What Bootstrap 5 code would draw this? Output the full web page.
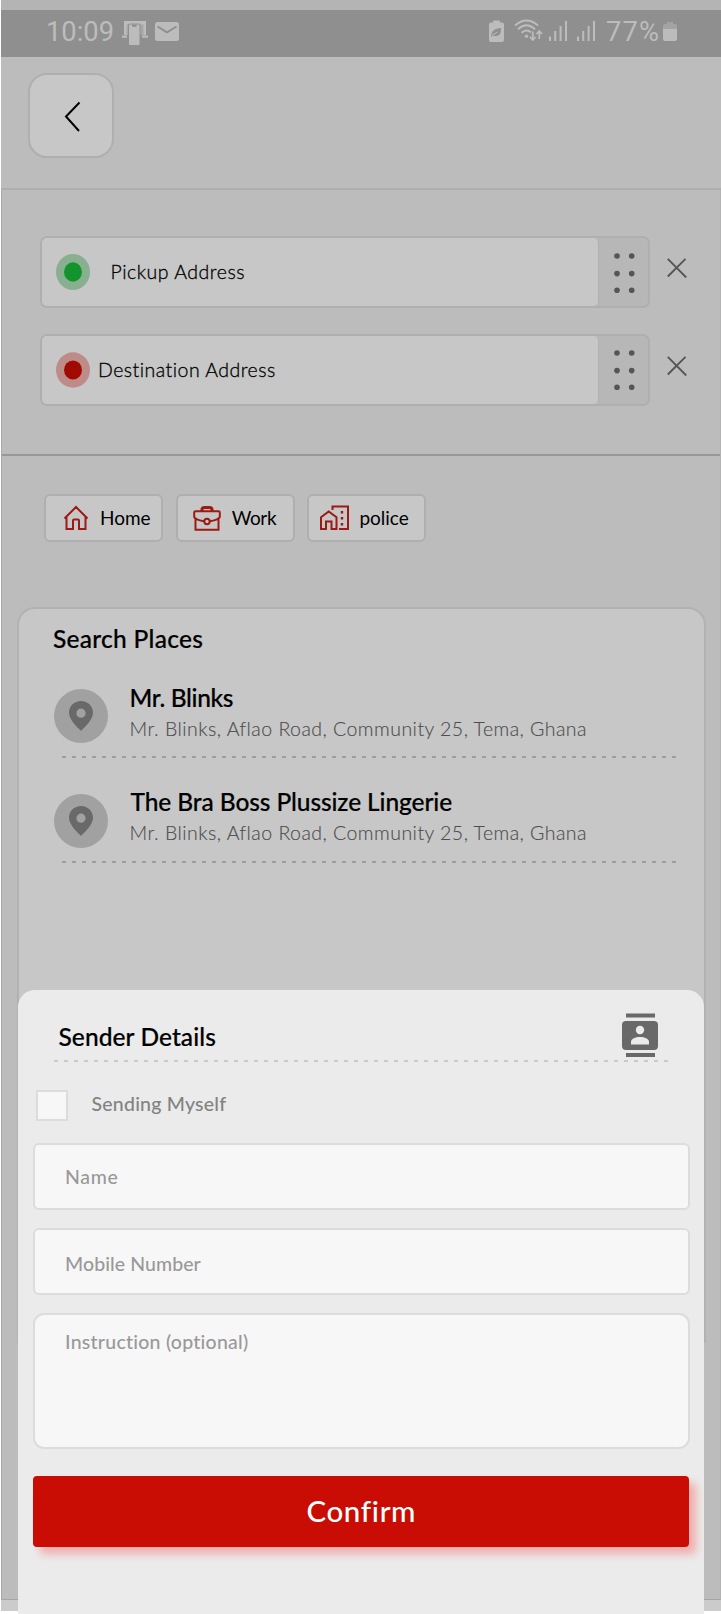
<!DOCTYPE html>
<html lang="en">
<head>
<meta charset="utf-8">
<meta name="viewport" content="width=device-width, initial-scale=1">
<title>Sender Details</title>
<link href="https://cdn.jsdelivr.net/npm/bootstrap@5.3.0/dist/css/bootstrap.min.css" rel="stylesheet">
<script src="https://cdn.jsdelivr.net/npm/bootstrap@5.3.0/dist/js/bootstrap.bundle.min.js" defer></script>
<style>
body{background:#fff;font-family:Lato,"Liberation Sans",sans-serif;color:#000;width:721px;overflow:hidden}
svg{display:block;flex:none}
.phone{width:721px;height:1614px;overflow:hidden}
.screen{height:1611px;margin-left:1px;background:#cbcbcb}
.strip{height:10px;background:#b4b4b4}
.status{height:47px;background:#8f8f8f;color:#bcbcbc;font-family:Roboto,sans-serif;font-size:27.3px;line-height:45px;padding:0 44px 0 45px}
.s-phone{margin:10px 0 0 7px}
.s-mail{margin:12px 0 0 6px}
.s-eco{margin:10px 0 0 auto}
.s-wifi{margin:9px 0 0 10px}
.s-sig{margin:11px 0 0 6px}
.s-sig + .s-sig{margin-left:9px}
.s-pct{margin-left:10px;letter-spacing:1.1px}
.s-bat{margin:12px 0 0 3px}
.topbar{height:133px;background:#bcbcbc;border-bottom:2px solid #aeaeae;padding:16px 0 0 27px}
.back{width:86px;height:85px;border:2px solid #afafaf;border-radius:19px;background:#c7c7c7;padding:26px 0 0 34px}
.lower{height:1410px;background:#bcbcbc;border-left:1px solid #a9a9a9;border-right:1px solid #b3b3b3;border-bottom:1px solid #a5a5a5}
.stops{height:266px;border-bottom:2px solid #989898;padding:46px 0 0 38px}
.stop + .stop{margin-top:25.5px}
.track{width:610px;height:72px;border:2px solid #afafaf;border-radius:7px;background:#b7b7b7}
.field{width:557px;border-right:1px solid #b1b1b1;border-radius:5px;background:#c7c7c7;padding-left:14px;font-size:19.5px;font-weight:300;letter-spacing:.52px;-webkit-text-stroke:.3px #000}
.field svg{margin-right:20.5px}
.field.near{letter-spacing:.48px}
.field.near svg{margin-right:8px}
.handle{margin:1px 0 0 15px}
.drop{margin:22px 0 0 17px}
.tags{height:151px;padding:38px 0 0 42px;gap:12.7px}
.chip{width:119px;height:48px;border:2px solid #afafaf;border-radius:6px;background:#c7c7c7;font-size:19px;line-height:44px}
.places{width:689px;height:736px;margin-left:15px;border:2px solid #b2b2b2;border-radius:18px 18px 0 0;background:#c7c7c7;padding:13px 0 0 34px}
.ttl{font-size:24.5px;font-weight:500;line-height:34px;white-space:nowrap;-webkit-text-stroke:.2px #000}
.place{height:104.5px}
.place-text{margin-top:-.5px}
.pin{width:54px;height:54px;margin:8px 22px 0 .5px;background:#a1a1a1}
.addr{font-size:19.5px;font-weight:300;line-height:28px;letter-spacing:.47px;color:#4e4e4e;-webkit-text-stroke:.15px #4e4e4e;white-space:nowrap}
.dash{height:2px;opacity:.9;background:repeating-linear-gradient(90deg,#999 0 4px,transparent 4px 10px)}
.place .dash{width:615px;margin:13px 0 0 9px}
.sheet{left:17.5px;top:990px;width:686.5px;height:624px;border-radius:17px 17px 0 0;background:#ebebeb;padding:0 15px}
.sheet-head{height:70px;padding:23px 31px 0 26px}
.sheet .dash{width:615px;margin:0 0 28px 21px;opacity:1;background:repeating-linear-gradient(90deg,#c9c9c9 0 4px,transparent 4px 10px)}
.box{width:32px;height:31px;border:2px solid #dcdcdc;background:#f7f7f7}
.self{height:53px;padding-left:3px;font-size:19.5px;font-weight:500;color:#828282;letter-spacing:.22px;line-height:28px}
.inp{height:67px;border:2px solid #dcdcdc;border-radius:6px;background:#f7f7f7;padding-left:30.5px;font-size:19.5px;font-weight:500;color:#999;line-height:28px;margin-right:-.5px}
.area{height:136px;border-radius:11px}
.go{height:71px;border-radius:4px;background:#c90d04;color:#fff;font-size:29.5px;font-weight:500;box-shadow:7px 7px 9px rgba(255,30,30,.3);line-height:69px;letter-spacing:.65px;padding-left:1px}
</style>
</head>
<body>
<svg width="0" height="0" class="position-absolute">
 <defs>
  <g id="bars"><path d="M0 15.500h2V20H0zM5.200 10h2v10h-2zM10.600 5h2v15h-2zM16 0h2v20h-2z"/></g>
  <g id="dots"><circle cx="3" cy="3" r="2.800"/><circle cx="17.700" cy="3" r="2.800"/><circle cx="3" cy="20.600" r="2.800"/><circle cx="17.700" cy="20.600" r="2.800"/><circle cx="3" cy="37.200" r="2.800"/><circle cx="17.700" cy="37.200" r="2.800"/></g>
  <path id="cross" d="M.8.8L19.200 19.500M18.500.8L.8 18.500"/>
  <path id="marker" fill-rule="evenodd" d="M12 0C5.400 0 0 5 0 11.600 0 18.800 7.500 25.500 12 30c4.500-4.500 12-11.200 12-18.400C24 5 18.600 0 12 0zm0 7.600a4.600 4.600 0 1 1 0 9.200 4.600 4.600 0 0 1 0-9.200z"/>
 </defs>
</svg>
<div class="phone position-relative">
 <main class="screen">
  <div class="strip"></div>
  <header class="status d-flex">
   <span>10:09</span>
   <svg class="s-phone" width="28" height="26" viewBox="0 0 28 26" fill="#bcbcbc"><path d="M3 1h22v14h-2.500V4.500H5.500V15H3zM1 15.500h5v2.300H1zM21 15.500h6v2.300h-6z"/><path d="M5 4h18v11H5z" opacity=".55"/><rect x="7" y="3.500" width="12.500" height="22.500" rx="1.500" fill="#8f8f8f"/><rect x="8" y="4.500" width="10.500" height="20.500" rx="1"/><path d="M11 4.500h4.500v2.300H11z" fill="#8f8f8f"/></svg>
   <svg class="s-mail" width="24" height="20" viewBox="0 0 24 20"><rect width="24" height="19" rx="2.500" fill="#bcbcbc"/><path d="M2.500 4.500L12 10.300 21.500 4.500" fill="none" stroke="#8f8f8f" stroke-width="2"/></svg>
   <svg class="s-eco" width="15" height="23" viewBox="0 0 15 23"><path fill="#bcbcbc" d="M4 2.500V1.500Q4 .5 5 .5h5q1 0 1 1v1h2q2 0 2 2V20q0 2-2 2H2q-2 0-2-2V4.500q0-2 2-2z"/><path d="M2 16.500C3 10 6 8.500 12 8c0 5-1 8-5 8-2 0-3 0-5 .5z" fill="#8f8f8f"/><path d="M3 15.500L8.500 12" stroke="#bcbcbc"/></svg>
   <svg class="s-wifi" width="29" height="23" viewBox="0 0 29 23" fill="none" stroke="#bcbcbc" stroke-width="1.900"><path d="M1 6.500Q12.500-3.500 24 6.500M4 10.200Q12.500 2.500 21 10.200M7.500 13.800Q12.500 9.500 17 13.300"/><circle cx="12.500" cy="17.300" r="1.700" fill="#bcbcbc" stroke="none"/><path d="M18.800 12.500v8M16 18l2.800 3 2.800-3M25.300 20v-7.500M22.500 15l2.800-3 2.800 3" stroke-width="1.700"/></svg>
   <svg class="s-sig" width="19" height="20" viewBox="0 0 19 20" fill="#bcbcbc"><use href="#bars"/></svg>
   <svg class="s-sig" width="19" height="20" viewBox="0 0 19 20" fill="#bcbcbc"><use href="#bars"/></svg>
   <span class="s-pct">77%</span>
   <svg class="s-bat" width="14" height="20" viewBox="0 0 14 20"><path fill="#a3a3a3" d="M0 7V4q0-2 2-2h2V0h6v2h2q2 0 2 2v3z"/><path fill="#bcbcbc" d="M0 7h14v10q0 2-2 2H2q-2 0-2-2z"/></svg>
  </header>
  <div class="topbar"><div class="back"><svg width="20" height="32" viewBox="0 0 20 32"><path d="M15.500 1.500L2 15.500 15 30" fill="none" stroke="#000" stroke-width="2"/></svg></div></div>
  <div class="lower">
   <section class="stops">
    <div class="stop d-flex">
     <div class="track d-flex align-items-stretch">
      <div class="field d-flex align-items-center"><svg width="34" height="36" viewBox="0 0 34 36"><ellipse cx="17" cy="18" rx="17" ry="18" fill="#88b090"/><ellipse cx="17" cy="18" rx="9" ry="9.700" fill="#12932b"/></svg><span>Pickup Address</span></div>
      <svg class="handle align-self-center" width="21" height="40" viewBox="0 0 21 40" fill="#555"><use href="#dots"/></svg>
     </div>
     <svg class="drop" width="20" height="20" viewBox="0 0 20 20" stroke="#555" stroke-width="1.900" fill="none"><use href="#cross"/></svg>
    </div>
    <div class="stop d-flex">
     <div class="track d-flex align-items-stretch">
      <div class="field near d-flex align-items-center"><svg width="34" height="36" viewBox="0 0 34 36"><ellipse cx="17" cy="18" rx="17" ry="17.700" fill="#be8c88"/><ellipse cx="17" cy="18" rx="9" ry="9.500" fill="#a00a03"/></svg><span>Destination Address</span></div>
      <svg class="handle align-self-center" width="21" height="40" viewBox="0 0 21 40" fill="#555"><use href="#dots"/></svg>
     </div>
     <svg class="drop" width="20" height="20" viewBox="0 0 20 20" stroke="#555" stroke-width="1.900" fill="none"><use href="#cross"/></svg>
    </div>
   </section>
   <nav class="tags d-flex">
    <div class="chip d-flex align-items-center" style="padding-left:17px"><svg width="26" height="26" viewBox="0 0 26 26" fill="none" stroke="#9c1a14" stroke-width="2" class="me-2"><path d="M1.500 13.500L13 2l11.500 11.500M3.500 11.500V24H10v-8.500q0-1 1-1h4q1 0 1 1V24h6.500V11.500"/></svg><span style="margin-left:3px">Home</span></div>
    <div class="chip d-flex align-items-center" style="padding-left:15px"><svg width="28" height="26" viewBox="0 0 28 26" fill="none" stroke="#9c1a14" stroke-width="2"><path d="M9 6V4.500Q9 2.500 11.500 2.500h5q2.500 0 2.500 2V6" stroke-width="3"/><path d="M11.300 16.300C7 15.800 1.200 14 1.200 11.500V7.500q0-1.300 1.300-1.300h23q1.300 0 1.300 1.300v4c0 2.500-5.800 4.300-10.100 4.800M2.500 14v10.700h23V14"/><circle cx="14" cy="16.500" r="2.700"/></svg><span style="margin-left:11px;letter-spacing:-.35px">Work</span></div>
    <div class="chip d-flex align-items-center" style="padding-left:10px"><svg width="31" height="26" viewBox="0 0 31 26" fill="none" stroke="#9c1a14" stroke-width="2"><path d="M2 12.300L9.700 6.500l7.800 5.800V24h-5v-7.500H7V24H2zM13.500 5V1.500H29V24h-9"/><path d="M23 6v2.500M23 12v2.500M23 18v2.500" stroke-width="2.400"/></svg><span style="margin-left:9px">police</span></div>
   </nav>
   <section class="places">
    <div class="ttl" style="letter-spacing:.27px">Search Places</div>
    <div style="height:25px"></div>
    <div class="place">
     <div class="d-flex"><div class="pin rounded-circle d-flex align-items-center justify-content-center"><svg width="24" height="30" viewBox="0 0 24 30" fill="#696969"><use href="#marker"/></svg></div><div class="place-text"><div class="ttl" style="letter-spacing:-.35px">Mr. Blinks</div><div class="addr">Mr. Blinks, Aflao Road, Community 25, Tema, Ghana</div></div></div>
     <div class="dash"></div>
    </div>
    <div class="place">
     <div class="d-flex"><div class="pin rounded-circle d-flex align-items-center justify-content-center"><svg width="24" height="30" viewBox="0 0 24 30" fill="#696969"><use href="#marker"/></svg></div><div class="place-text"><div class="ttl" style="letter-spacing:-.1px;padding-left:1px">The Bra Boss Plussize Lingerie</div><div class="addr">Mr. Blinks, Aflao Road, Community 25, Tema, Ghana</div></div></div>
     <div class="dash"></div>
    </div>
   </section>
  </div>
 </main>
 <section class="sheet position-absolute">
  <div class="sheet-head d-flex justify-content-between">
   <div class="ttl" style="letter-spacing:.08px;line-height:46px;height:46px;margin-top:1px">Sender Details</div>
   <svg width="36" height="44" viewBox="0 0 36 44" fill="#696969"><path d="M4 .500h29v4H4zM4 40h29v4H4z"/><rect y="8" width="36" height="29" rx="4"/><circle cx="18" cy="17" r="4.200" fill="#ebebeb"/><path d="M9 31.500v-2.500c0-3.200 4.500-5 9-5s9 1.800 9 5v2.500z" fill="#ebebeb"/></svg>
  </div>
  <div class="dash"></div>
  <div class="self d-flex"><div class="box"></div><span style="margin-left:24px">Sending Myself</span></div>
  <div class="inp" style="padding-top:18px;letter-spacing:.7px">Name</div>
  <div class="inp" style="margin-top:18px;padding-top:20px;letter-spacing:.08px">Mobile Number</div>
  <div class="inp area" style="margin-top:18px;padding-top:13px;letter-spacing:.25px">Instruction (optional)</div>
  <div class="go text-center" style="margin-top:27px">Confirm</div>
 </section>
</div>
</body>
</html>
